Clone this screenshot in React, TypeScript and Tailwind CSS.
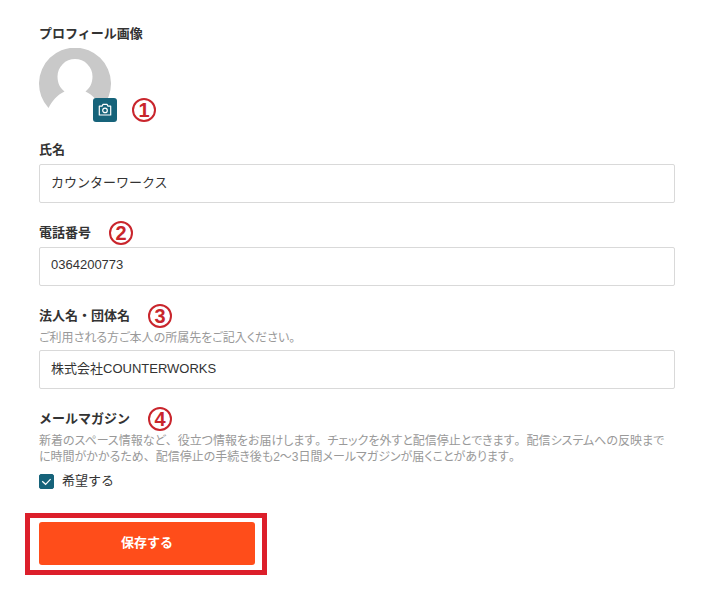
import { useState } from 'react';

interface MarkerProps {
  n: number;
}

/** Red circled step number next to a label. */
function Marker({ n }: MarkerProps) {
  return (
    <span className="-my-0.5 flex h-6 w-6 shrink-0 items-center justify-center rounded-full border-2 border-[#c9252c] font-['Liberation_Sans',sans-serif] text-xl font-bold leading-none text-[#c9252c]">
      {n}
    </span>
  );
}

interface FieldProps {
  id: string;
  label: string;
  defaultValue: string;
  marker?: number;
  hint?: string;
  type?: string;
}

function Field({ id, label, defaultValue, marker, hint, type = 'text' }: FieldProps) {
  return (
    <div className="flex flex-col gap-1">
      <div className="flex h-5 items-center gap-[18px]">
        <label htmlFor={id} className="font-bold">
          {label}
        </label>
        {marker && <Marker n={marker} />}
      </div>
      {hint && <Hint text={hint} />}
      <input
        id={id}
        type={type}
        defaultValue={defaultValue}
        className="h-[39px] w-full rounded-xs border border-[#d9d9d9] bg-white px-[11px] pb-1 text-[13px] text-[#333] outline-none focus:border-[#16637a]"
      />
    </div>
  );
}

/** Proportional kana, but punctuation keeps its full width. */
function Hint({ text }: { text: string }) {
  return (
    <p className="whitespace-pre-line text-xs leading-4 text-[#999] [font-feature-settings:'palt']">
      {text.split(/([、。])/).map((part, i) =>
        i % 2 === 1 ? (
          <span key={i} className="[font-feature-settings:normal]">
            {part}
          </span>
        ) : (
          part
        ),
      )}
    </p>
  );
}

function Avatar() {
  return (
    <svg viewBox="0 0 72 72" className="h-[72px] w-[72px]" aria-hidden="true">
      <path
        d="M9.5 60A36 36 0 1 1 62.5 60C59 53 54 47 46.5 43.5C51 40 53.5 35 53.5 28.5A17.5 17.5 0 0 0 18.5 28.5C18.5 35 21 40 25.5 43.5C18 47 13 53 9.5 60Z"
        fill="#c9c9c9"
      />
    </svg>
  );
}

function CameraIcon() {
  return (
    <svg
      viewBox="0 0 14 14"
      className="h-3.5 w-3.5"
      fill="none"
      stroke="currentColor"
      strokeWidth="1.2"
      strokeLinejoin="round"
      aria-hidden="true"
    >
      <path d="M1.3 3.2H4L5 1.4H9L10 3.2H12.7V12H1.3Z" />
      <circle cx="7" cy="7.4" r="2.3" />
    </svg>
  );
}

export default function App() {
  const [subscribed, setSubscribed] = useState(true);

  return (
    <form
      onSubmit={(e) => e.preventDefault()}
      className="bg-white pt-6 pr-[30px] pb-10 pl-[39px] font-['Liberation_Sans','Noto_Sans_CJK_JP',sans-serif] text-[13px] leading-5 text-[#333]"
    >
      <div className="flex flex-col gap-5">
        <section className="flex flex-col gap-1">
          <h2 className="font-bold">プロフィール画像</h2>
          <div className="flex items-end gap-[21px]">
            <div className="relative">
              <Avatar />
              <button
                type="button"
                aria-label="画像を変更"
                className="absolute -right-1.5 -bottom-0.5 flex h-6 w-6 items-center justify-center rounded-[3px] bg-[#16637a] text-white"
              >
                <CameraIcon />
              </button>
            </div>
            <Marker n={1} />
          </div>
        </section>

        <Field id="name" label="氏名" defaultValue="カウンターワークス" />
        <Field id="tel" type="tel" label="電話番号" defaultValue="0364200773" marker={2} />
        <Field
          id="company"
          label="法人名・団体名"
          defaultValue="株式会社COUNTERWORKS"
          marker={3}
          hint="ご利用される方ご本人の所属先をご記入ください。"
        />

        <section className="flex flex-col gap-1">
          <div className="flex h-5 items-center gap-[18px]">
            <h2 className="font-bold">メールマガジン</h2>
            <Marker n={4} />
          </div>
          <Hint text="新着のスペース情報など、役立つ情報をお届けします。チェックを外すと配信停止とできます。配信システムへの反映までに時間がかかるため、配信停止の手続き後も2〜3日間メールマガジンが届くことがあります。" />
          <label className="mt-0.5 flex items-center gap-2 self-start">
            <span className="relative flex">
              <input
                type="checkbox"
                checked={subscribed}
                onChange={(e) => setSubscribed(e.target.checked)}
                className="h-[15px] w-[15px] appearance-none rounded-xs border border-[#16637a] bg-white checked:bg-[#16637a]"
              />
              {subscribed && (
                <svg
                  viewBox="0 0 15 15"
                  className="pointer-events-none absolute inset-0"
                  fill="none"
                  stroke="#fff"
                  strokeWidth="1.2"
                  aria-hidden="true"
                >
                  <path d="M3.2 7.2L6.6 10.3L11.6 5.2" />
                </svg>
              )}
            </span>
            希望する
          </label>
        </section>
      </div>

      <div className="mt-[22px] -ml-3.5 w-fit border-5 border-[#dc1f2b] pt-1 pr-[7px] pb-[5px] pl-[9px]">
        <button
          type="submit"
          className="h-[43px] w-[216px] rounded-[3px] bg-[#ff4d1a] pb-0.5 text-center text-[13px] font-bold text-white"
        >
          保存する
        </button>
      </div>
    </form>
  );
}
